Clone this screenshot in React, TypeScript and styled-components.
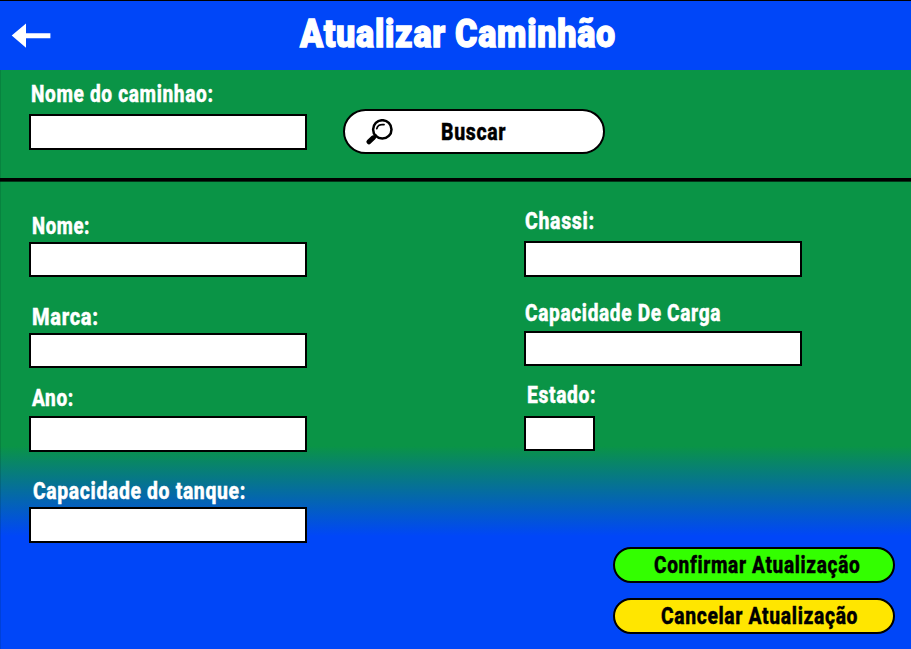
import React, { useLayoutEffect, useRef, useState } from "react";
import styled, { createGlobalStyle } from "styled-components";

const GlobalStyle = createGlobalStyle`
  * { box-sizing: border-box; }
  body { margin: 0; overflow: hidden; background: #0046f8; }
`;

const Screen = styled.div`
  width: 911px;
  height: 649px;
  display: flex;
  flex-direction: column;
  overflow: hidden;
  border-top: 1px solid #000;
  font-family: Roboto, "Liberation Sans", sans-serif;
  color: #fff;
`;

const Header = styled.header`
  flex: 0 0 69px;
  display: flex;
  align-items: flex-start;
  background: #0046f8;
`;

const BackButton = styled.button`
  width: 40px;
  height: 26px;
  margin: 22px 0 0 11px;
  padding: 0;
  border: 0;
  background: none;
  color: inherit;
  svg { display: block; }
`;

const Title = styled.h1`
  margin: 13px 0 0 249px;
  font-size: 38px;
  line-height: 40px;
  font-weight: 900;
  -webkit-text-stroke: 1.3px currentColor;
`;

const Body = styled.main`
  flex: 1;
  display: flex;
  flex-direction: column;
  background: linear-gradient(to bottom, #0a9446 0, #0a9446 376px, #0046f8 466px);
  box-shadow: inset 1px 0 0 rgba(0, 30, 20, 0.14);
`;

const SearchBar = styled.section`
  flex: 0 0 108px;
  display: flex;
  align-items: flex-start;
  padding-left: 29px;
`;

const Divider = styled.div`
  flex: 0 0 3px;
  background: #000;
  box-shadow: 0 1px 0 rgba(0, 0, 0, 0.65);
`;

const Form = styled.form`
  flex: 1;
  display: grid;
  grid-template-columns: 495px 1fr;
  padding-left: 29px;
`;

const Column = styled.div`
  display: flex;
  flex-direction: column;
`;

const FieldBox = styled.label<{ $top: number; $gap: number }>`
  display: flex;
  flex-direction: column;
  gap: ${(p) => p.$gap}px;
  margin-top: ${(p) => p.$top}px;
`;

const Caption = styled.span<{ $indent: number }>`
  height: 24px;
  padding-left: ${(p) => p.$indent}px;
  font-size: 24px;
  line-height: 24px;
  font-weight: 800;
  -webkit-text-stroke: 0.4px currentColor;
`;

const TextInput = styled.input<{ $width: number; $height: number }>`
  width: ${(p) => p.$width}px;
  height: ${(p) => p.$height}px;
  padding: 0 8px;
  border: 2px solid #000;
  border-radius: 0;
  outline: none;
  background: #fff;
  font: 700 18px Roboto, sans-serif;
`;

const Pill = styled.button<{ $fill: string; $inset: number }>`
  display: flex;
  align-items: center;
  width: 282px;
  height: 36px;
  padding: 0 0 0 ${(p) => p.$inset}px;
  border: 2px solid #000;
  border-radius: 18px;
  background: ${(p) => p.$fill};
  color: #000;
  font-family: inherit;
  font-size: 24px;
  line-height: 24px;
  font-weight: 800;
  -webkit-text-stroke: 0.4px currentColor;
`;

const SearchButton = styled(Pill)`
  width: 262px;
  height: 45px;
  margin: 39px 0 0 36px;
  border-radius: 23px;
  svg { margin-right: 48px; }
`;

const Actions = styled.div`
  display: flex;
  flex-direction: column;
  gap: 15px;
  margin: 96px 0 0 89px;
`;

const TextFrame = styled.span`
  display: block;
  white-space: nowrap;
  text-align: left;
`;

const TextRun = styled.span`
  display: inline-block;
  transform-origin: 0 50%;
  letter-spacing: 0.8px;
`;

// Condenses a line of text so that it fills exactly the given width.
function FitText({ width, children }: { width: number; children: string }) {
  const ref = useRef<HTMLSpanElement>(null);
  const [scale, setScale] = useState(1);
  useLayoutEffect(() => {
    if (ref.current) setScale(width / ref.current.offsetWidth);
  }, [width, children]);
  return (
    <TextFrame>
      <TextRun ref={ref} style={{ transform: `scaleX(${scale})` }}>{children}</TextRun>
    </TextFrame>
  );
}

interface FieldProps {
  label: string;
  labelWidth: number;
  indent: number;
  top: number;
  gap: number;
  width?: number;
  height?: number;
}

function Field({ label, labelWidth, indent, top, gap, width = 278, height = 36 }: FieldProps) {
  return (
    <FieldBox $top={top} $gap={gap}>
      <Caption $indent={indent}><FitText width={labelWidth}>{label}</FitText></Caption>
      <TextInput $width={width} $height={height} />
    </FieldBox>
  );
}

const ArrowIcon = () => (
  <svg width="40" height="26" viewBox="0 0 40 26" fill="currentColor">
    <path d="M.7 12.6 15 .6v9.7h24.4v4.9H15v9.6Z" />
  </svg>
);

const SearchIcon = () => (
  <svg width="27" height="26" viewBox="0 0 27 26" fill="none" stroke="#000" strokeLinecap="round">
    <circle cx="16.3" cy="10.4" r="9.2" strokeWidth="2.5" />
    <path d="M10.8 9.6c.5-2.7 3.3-4.6 7.2-3.9" strokeWidth="1.8" />
    <path d="m9.6 16.8-2.2 2.2" strokeWidth="3.2" />
    <path d="m7.2 18.8-4.2 4" strokeWidth="5" />
  </svg>
);

export default function App() {
  return (
    <>
      <GlobalStyle />
      <Screen>
        <Header>
          <BackButton aria-label="Voltar"><ArrowIcon /></BackButton>
          <Title><FitText width={316}>Atualizar Caminhão</FitText></Title>
        </Header>
        <Body>
          <SearchBar>
            <Field label="Nome do caminhao:" labelWidth={183} indent={2} top={12} gap={8} />
            <SearchButton type="button" $fill="#fff" $inset={21}>
              <SearchIcon />
              <FitText width={65}>Buscar</FitText>
            </SearchButton>
          </SearchBar>
          <Divider />
          <Form>
            <Column>
              <Field label="Nome:" labelWidth={58} indent={2.5} top={33} gap={4} height={35} />
              <Field label="Marca:" labelWidth={67} indent={2.5} top={28} gap={4} height={35} />
              <Field label="Ano:" labelWidth={42} indent={2.5} top={18} gap={6} />
              <Field label="Capacidade do tanque:" labelWidth={213} indent={4} top={27} gap={4} />
            </Column>
            <Column>
              <Field label="Chassi:" labelWidth={70} indent={1} top={28} gap={8} />
              <Field label="Capacidade De Carga" labelWidth={196} indent={1} top={24} gap={6} height={35} />
              <Field label="Estado:" labelWidth={69} indent={2.5} top={17} gap={9} width={71} height={35} />
              <Actions>
                <Pill type="button" $fill="#33ff00" $inset={39}>
                  <FitText width={206}>Confirmar Atualização</FitText>
                </Pill>
                <Pill type="button" $fill="#ffe600" $inset={46}>
                  <FitText width={197}>Cancelar Atualização</FitText>
                </Pill>
              </Actions>
            </Column>
          </Form>
        </Body>
      </Screen>
    </>
  );
}
